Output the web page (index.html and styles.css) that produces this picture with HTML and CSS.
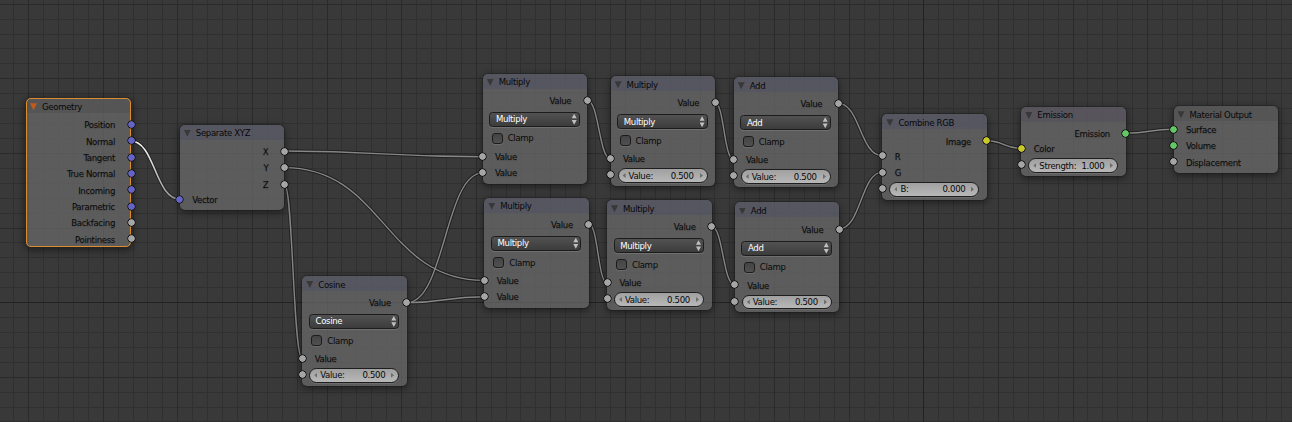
FILE: index.html
```html
<!DOCTYPE html>
<html lang="en">
<head>
<meta charset="utf-8">
<title>Node Editor</title>
<link rel="stylesheet" href="styles.css">
</head>
<body>
<main class="canvas">
<svg class="layer" id="grid" width="1292" height="422" viewBox="0 0 1292 422"></svg>
<svg class="layer" width="1292" height="422" viewBox="0 0 1292 422">
  <defs>
    <linearGradient id="fade" gradientUnits="userSpaceOnUse" x1="131" y1="141" x2="180" y2="199"><stop offset="0" stop-color="#fff"/><stop offset="0.35" stop-color="#ddd"/><stop offset="1" stop-color="#888"/></linearGradient>
    <g id="links">
      <path d="M284.3 151C383 151 383 156.7 482.7 156.7"/>
      <path d="M284.3 167.6C384 167.6 384 280.4 484.3 280.4"/>
      <path d="M284.3 184C293 184 293 358.8 302.3 358.8"/>
      <path d="M406.8 302.7C445 302.7 445 172.9 482.7 172.9"/>
      <path d="M406.8 302.7C445 302.7 445 296.8 484.3 296.8"/>
      <path d="M587 100.3C599 100.3 599 158.8 610.6 158.8"/>
      <path d="M715 102.7C724 102.7 724 159.7 733.8 159.7"/>
      <path d="M589 224.3C598 224.3 598 282.7 607 282.7"/>
      <path d="M711.6 226.5C723 226.5 723 285 734.8 285"/>
      <path d="M838.2 103.4C860 103.4 860 155.8 882.5 155.8"/>
      <path d="M839.2 228.9C861 228.9 861 172.1 882.5 172.1"/>
      <path d="M986.8 140.8C1004 140.8 1004 148.4 1021.4 148.4"/>
      <path d="M1125.8 133.2C1149.500 133.2 1149.500 129.2 1173.500 129.2"/>
    </g>
  </defs>
  <use href="#links" class="link-edge"/>
  <use href="#links" class="link-core"/>
  <path class="link-edge" d="M130.700 141C155 141 155 199.200 180 199.200"/>
  <path class="link-active" d="M130.700 141C155 141 155 199.200 180 199.200"/>
</svg>

<section class="node geometry selected">
  <h2 class="head"><i class="tri"></i>Geometry</h2>
  <div class="row out">Position<i class="socket vec"></i></div>
  <div class="row out">Normal<i class="socket vec"></i></div>
  <div class="row out">Tangent<i class="socket vec"></i></div>
  <div class="row out">True Normal<i class="socket vec"></i></div>
  <div class="row out">Incoming<i class="socket vec"></i></div>
  <div class="row out">Parametric<i class="socket vec"></i></div>
  <div class="row out">Backfacing<i class="socket"></i></div>
  <div class="row out">Pointiness<i class="socket"></i></div>
</section>

<section class="node convert separate">
  <h2 class="head"><i class="tri"></i>Separate XYZ</h2>
  <div class="row out">X<i class="socket"></i></div>
  <div class="row out">Y<i class="socket"></i></div>
  <div class="row out">Z<i class="socket"></i></div>
  <div class="row in">Vector<i class="socket vec"></i></div>
</section>

<section class="node convert math cosine">
  <h2 class="head"><i class="tri"></i>Cosine</h2>
  <div class="row out">Value<i class="socket"></i></div>
  <div class="select">Cosine<i class="arrows"></i></div>
  <div class="check"><i class="box"></i>Clamp</div>
  <div class="row in">Value<i class="socket"></i></div>
  <div class="row in"><div class="field"><span>Value:</span><span>0.500</span></div><i class="socket"></i></div>
</section>

<section class="node convert math mul-a">
  <h2 class="head"><i class="tri"></i>Multiply</h2>
  <div class="row out">Value<i class="socket"></i></div>
  <div class="select">Multiply<i class="arrows"></i></div>
  <div class="check"><i class="box"></i>Clamp</div>
  <div class="row in">Value<i class="socket"></i></div>
  <div class="row in">Value<i class="socket"></i></div>
</section>

<section class="node convert math mul-b">
  <h2 class="head"><i class="tri"></i>Multiply</h2>
  <div class="row out">Value<i class="socket"></i></div>
  <div class="select">Multiply<i class="arrows"></i></div>
  <div class="check"><i class="box"></i>Clamp</div>
  <div class="row in">Value<i class="socket"></i></div>
  <div class="row in"><div class="field"><span>Value:</span><span>0.500</span></div><i class="socket"></i></div>
</section>

<section class="node convert math add-a">
  <h2 class="head"><i class="tri"></i>Add</h2>
  <div class="row out">Value<i class="socket"></i></div>
  <div class="select">Add<i class="arrows"></i></div>
  <div class="check"><i class="box"></i>Clamp</div>
  <div class="row in">Value<i class="socket"></i></div>
  <div class="row in"><div class="field"><span>Value:</span><span>0.500</span></div><i class="socket"></i></div>
</section>

<section class="node convert math mul-c">
  <h2 class="head"><i class="tri"></i>Multiply</h2>
  <div class="row out">Value<i class="socket"></i></div>
  <div class="select">Multiply<i class="arrows"></i></div>
  <div class="check"><i class="box"></i>Clamp</div>
  <div class="row in">Value<i class="socket"></i></div>
  <div class="row in">Value<i class="socket"></i></div>
</section>

<section class="node convert math mul-d">
  <h2 class="head"><i class="tri"></i>Multiply</h2>
  <div class="row out">Value<i class="socket"></i></div>
  <div class="select">Multiply<i class="arrows"></i></div>
  <div class="check"><i class="box"></i>Clamp</div>
  <div class="row in">Value<i class="socket"></i></div>
  <div class="row in"><div class="field"><span>Value:</span><span>0.500</span></div><i class="socket"></i></div>
</section>

<section class="node convert math add-b">
  <h2 class="head"><i class="tri"></i>Add</h2>
  <div class="row out">Value<i class="socket"></i></div>
  <div class="select">Add<i class="arrows"></i></div>
  <div class="check"><i class="box"></i>Clamp</div>
  <div class="row in">Value<i class="socket"></i></div>
  <div class="row in"><div class="field"><span>Value:</span><span>0.500</span></div><i class="socket"></i></div>
</section>

<section class="node convert combine">
  <h2 class="head"><i class="tri"></i>Combine RGB</h2>
  <div class="row out">Image<i class="socket color"></i></div>
  <div class="row in">R<i class="socket"></i></div>
  <div class="row in">G<i class="socket"></i></div>
  <div class="row in"><div class="field"><span>B:</span><span>0.000</span></div><i class="socket"></i></div>
</section>

<section class="node shader emission">
  <h2 class="head"><i class="tri"></i>Emission</h2>
  <div class="row out">Emission<i class="socket closure"></i></div>
  <div class="row in">Color<i class="socket color"></i></div>
  <div class="row in"><div class="field"><span>Strength:</span><span>1.000</span></div><i class="socket"></i></div>
</section>

<section class="node output">
  <h2 class="head"><i class="tri"></i>Material Output</h2>
  <div class="row in">Surface<i class="socket closure"></i></div>
  <div class="row in">Volume<i class="socket closure"></i></div>
  <div class="row in">Displacement<i class="socket"></i></div>
</section>
</main>
<script src="grid.js"></script>
</body>
</html>
```
FILE: styles.css
```css
* { box-sizing: border-box; }
body {
  margin: 0;
  background: #393939;
  overflow: hidden;
}
.canvas {
  position: relative;
  width: 1292px;
  height: 422px;
  overflow: hidden;
  font: 9.5px/16px "DejaVu Sans Condensed", "DejaVu Sans", sans-serif;
  font-stretch: condensed;
  letter-spacing: -.32px;
  color: #080808;
}
.layer { position: absolute; left: 0; top: 0; }
.minor { fill: #303030; }
.major { fill: #2a2a2a; }
.axis { fill: #222; }
.link-edge { fill: none; stroke: #1c1c1c; stroke-width: 3.4; stroke-opacity: .85; }
.link-core { fill: none; stroke: #868686; stroke-width: 1.4; }
.link-active { fill: none; stroke: url(#fade); stroke-width: 1.6; }

/* Nodes: placed freely on the canvas, rows inside follow the flow */
.node {
  position: absolute;
  display: flex;
  flex-direction: column;
  width: 104.6px;
  border-radius: 5px;
  background: rgba(104, 104, 104, .75);
  box-shadow: 0 0 0 .7px rgba(20, 20, 20, .4), 0 2px 7px 1px rgba(0, 0, 0, .42);
}
.head {
  display: flex;
  align-items: center;
  height: 15px;
  margin: 0 0 3.6px;
  padding: 2.4px 0 0 4px;
  border-radius: 5px 5px 0 0;
  font: inherit;
  background: rgba(60, 60, 60, .2);
}
.convert .head { background: rgba(75, 75, 105, .35); }
.shader .head { background: rgba(80, 70, 88, .35); }
.tri {
  width: 7px;
  height: 7px;
  margin-right: 5px;
  background: #383838;
  clip-path: polygon(0 0, 100% 0, 50% 100%);
}
.row {
  position: relative;
  display: flex;
  align-items: center;
  height: 16.35px;
  padding: 1.4px 16px 0 12.400px;
  text-shadow: 0 1px 1px rgba(0, 0, 0, .18);
  white-space: nowrap;
}
.out { justify-content: flex-end; }
.socket {
  --fill: #a5a5a5;
  position: absolute;
  top: 3.7px;
  width: 9px;
  height: 9px;
  background: radial-gradient(circle, var(--fill) 2.9px, #191919 3.6px, #191919 3.8px, transparent 4.500px);
}
.out .socket { right: -4.500px; }
.in .socket { left: -4.500px; }
.vec { --fill: #6464c8; }
.color { --fill: #c8c82a; }
.closure { --fill: #63c763; }

.select {
  display: flex;
  align-items: center;
  justify-content: space-between;
  height: 15px;
  margin: 3.2px 7.6px 3.8px 6.600px;
  padding: 0 2px 0 5.600px;
  border: 1px solid #1c1c1c;
  border-radius: 3.500px;
  background: linear-gradient(#525252, #3c3c3c);
  box-shadow: 0 1px 0 rgba(255, 255, 255, .12);
  color: #fff;
}
.arrows {
  width: 5px;
  height: 11px;
  background: #c0c0c0;
  clip-path: polygon(50% 0, 100% 42%, 0 42%, 50% 0, 50% 100%, 0 58%, 100% 58%, 50% 100%);
}
.check {
  display: flex;
  align-items: center;
  gap: 5px;
  height: 16px;
  margin-bottom: 1.4px;
  padding-left: 9px;
}
.box {
  width: 11px;
  height: 11px;
  border: 1px solid #1c1c1c;
  border-radius: 3px;
  background: linear-gradient(#444, #505050);
  box-shadow: 0 1px 0 rgba(255, 255, 255, .1);
}
.field {
  display: flex;
  flex: 1;
  align-items: center;
  justify-content: space-between;
  height: 14.600px;
  margin: 0 -8.400px 0 -5.400px;
  padding: 0 4px;
  border: 1px solid #1e1e1e;
  border-radius: 8px;
  background: linear-gradient(#a0a0a0, #b8b8b8);
  box-shadow: 0 1px 0 rgba(255, 255, 255, .1);
  text-shadow: none;
}
.field::before, .field::after {
  content: "";
  width: 3px;
  height: 5px;
  background: #6e6e6e;
  clip-path: polygon(100% 0, 100% 100%, 0 50%);
}
.field::after { transform: scaleX(-1); }
.field span:first-child { margin-right: auto; margin-left: 3px; }
.field span:last-child { margin-right: 6px; }

.geometry { left: 26px; top: 98px; width: 105px; height: 149px; }
.geometry .head { margin-bottom: 3.400px; }
.selected {
  outline: 1.400px solid #dc8c2c;
  outline-offset: -1px;
  box-shadow: 0 2px 7px 2px rgba(0, 0, 0, .42);
}
.selected .tri { background: #c35a1c; }
.separate { left: 179.800px; top: 124.600px; height: 85.400px; }
.separate .row.in { margin-top: -1px; }
.math { height: 110px; }
.cosine { left: 302.300px; top: 275.800px; }
.mul-a { left: 482.700px; top: 73.500px; }
.mul-b { left: 610.600px; top: 76px; }
.add-a { left: 733.700px; top: 77px; }
.mul-c { left: 484.300px; top: 197.600px; }
.mul-d { left: 607px; top: 200px; }
.add-b { left: 734.800px; top: 202.400px; }
.combine { left: 882.400px; top: 114.100px; height: 86px; }
.combine .out { margin-bottom: -1.300px; }
.emission { left: 1021.300px; top: 106.700px; height: 69.300px; }
.emission .out { margin-bottom: -1.300px; }
.output { left: 1173.500px; top: 106px; height: 67px; }
.output .head { margin-bottom: 0; }
```
FILE: grid.js
```js
// Grid lines every 14.92px around the origin, each fifth one darker.
const grid = document.getElementById("grid");
const STEP = 14.92, ORIGIN_X = 923.3, ORIGIN_Y = 302.1;

function line(k, vertical) {
  const at = Math.round((vertical ? ORIGIN_X : ORIGIN_Y) + k * STEP);
  const r = document.createElementNS("http://www.w3.org/2000/svg", "rect");
  r.setAttribute(vertical ? "x" : "y", at);
  r.setAttribute("width", vertical ? 1 : 1292);
  r.setAttribute("height", vertical ? 422 : 1);
  r.setAttribute("class", k === 0 ? "axis" : k % 5 === 0 ? "major" : "minor");
  grid.appendChild(r);
}
for (const major of [false, true]) {
  for (let k = -61; k <= 24; k++) if ((k % 5 === 0) === major) line(k, true);
  for (let k = -20; k <= 8; k++) if ((k % 5 === 0) === major) line(k, false);
}
```
